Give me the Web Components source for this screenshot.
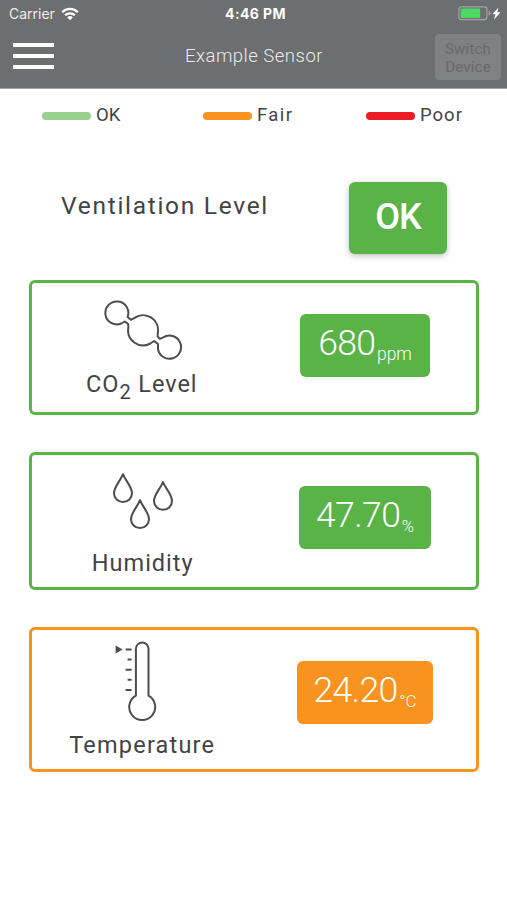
<!DOCTYPE html>
<html lang="en">
<head>
<meta charset="utf-8">
<title>Example Sensor</title>
<style>
  html, body { margin: 0; height: 100%; background: #fff; }
  body { font-family: Roboto, "Liberation Sans", sans-serif; color: #434345; }
</style>
</head>
<body>
<sensor-app></sensor-app>

<script>
class StatusBar extends HTMLElement {
  constructor() {
    super();
    this.attachShadow({ mode: 'open' });
    this.shadowRoot.innerHTML = `
<style>
  :host { display: grid; grid-template-columns: 1fr auto 1fr; align-items: center; height: 27px; padding: 0 5px 0 9px; color: #fff; font: 400 14px/27px Inter, sans-serif; }
  .left { display: flex; align-items: center; gap: 6px; color: #ececec; }
  .time { font-weight: 700; font-size: 14px; letter-spacing: .4px; }
  .right { display: flex; justify-content: flex-end; }
  svg { display: block; }
</style>
<div class="left"><span>Carrier</span>
  <svg width="18" height="14" viewBox="0 0 18 14" fill="none" stroke="#fff" stroke-width="2.3">
    <path d="M1.2 5.2a11 11 0 0 1 15.6 0"/>
    <path d="M4.1 8.3a7 7 0 0 1 9.8 0"/>
    <path d="M9 13.2L6.2 10.4a4 4 0 0 1 5.600 0z" fill="#fff" stroke="none"/>
  </svg>
</div>
<div class="time">4:46 PM</div>
<div class="right">
  <svg width="44" height="15" viewBox="0 0 44 15">
    <rect x=".9" y=".9" width="28" height="12.8" rx="2.6" fill="none" stroke="#a2a3a5" stroke-width="1.2"/>
    <rect x="2.6" y="2.6" width="19.6" height="9.4" rx="1" fill="#4cd964"/>
    <path d="M30.600 5q2 .6 2 2.300t-2 2.300z" fill="#a2a3a5"/>
    <path d="M40.500 1.500l-6.200 6.800h3.200l-1.600 5.400 6.600-7.400h-3.300z" fill="#fff"/>
  </svg>
</div>`;
  }
}
customElements.define('status-bar', StatusBar);

class NavBar extends HTMLElement {
  constructor() {
    super();
    this.attachShadow({ mode: 'open' });
    this.shadowRoot.innerHTML = `
<style>
  :host { display: grid; grid-template-columns: 1fr auto 1fr; align-items: center; height: 61px; padding: 0 6px 0 13px; box-sizing: border-box; }
  .menu { display: grid; gap: 6.7px; width: 41px; padding-bottom: 3px; }
  .menu i { height: 4.3px; background: #fff; }
  .title { color: #ebebec; font-weight: 300; font-size: 18.5px; line-height: 24px; letter-spacing: .5px; padding-bottom: 4px; margin: 0 -.5px 0 -6.5px; }
  button { justify-self: end; width: 66px; height: 46px; margin: 0 0 1px; padding: 2px 0 0; border: 0; border-radius: 4px; background: #808183; color: #69696b; font: 400 15px/18px Roboto, sans-serif; letter-spacing: .2px; }
</style>
<div class="menu"><i></i><i></i><i></i></div>
<div class="title"><slot></slot></div>
<button>Switch<br>Device</button>`;
  }
}
customElements.define('nav-bar', NavBar);

class LegendItem extends HTMLElement {
  constructor() {
    super();
    this.attachShadow({ mode: 'open' });
    this.shadowRoot.innerHTML = `
<style>
  :host { display: flex; align-items: center; gap: 5.5px; font-size: 18.5px; line-height: 24px; letter-spacing: var(--ls, 1px); }
  i { width: 48.5px; height: 8px; border-radius: 4px; background: var(--c); margin-top: 2px; }
</style>
<i></i><span><slot></slot></span>`;
  }
}
customElements.define('legend-item', LegendItem);

class ValueBadge extends HTMLElement {
  constructor() {
    super();
    this.attachShadow({ mode: 'open' });
    this.shadowRoot.innerHTML = `
<style>
  :host { display: flex; justify-content: center; gap: 1.5px; box-sizing: border-box; width: var(--w); height: 62.5px; border-radius: 6px; background: var(--c); color: #fff; white-space: nowrap; }
  .num { font-weight: 300; font-size: 35.5px; line-height: 58px; letter-spacing: -.6px; }
  .unit { font-weight: 300; font-size: var(--us, 17.5px); line-height: 58px; padding-top: var(--up, 11px); }
</style>
<span class="num"><slot></slot></span><span class="unit"><slot name="unit"></slot></span>`;
  }
}
customElements.define('value-badge', ValueBadge);

class SensorCard extends HTMLElement {
  constructor() {
    super();
    this.attachShadow({ mode: 'open' });
    this.shadowRoot.innerHTML = `
<style>
  :host { display: grid; grid-template-columns: 223.5px 219px; box-sizing: border-box; width: 450px; border: 3.5px solid var(--c); border-radius: 6px; margin-left: 29px; }
  .what { display: flex; flex-direction: column; align-items: center; justify-content: space-between; }
  .label { font-size: 23.5px; line-height: 28px; white-space: nowrap; letter-spacing: var(--ll, 1px); margin-right: 2px; }
  .value { display: flex; justify-content: center; align-items: flex-start; padding-top: 31px; }
</style>
<div class="what"><slot name="icon"></slot><div class="label"><slot name="label"></slot></div></div>
<div class="value"><slot></slot></div>`;
  }
}
customElements.define('sensor-card', SensorCard);

const ICONS = {
  co2: `<svg width="80" height="62" viewBox="104.2 299 80 62">
    <path d="M127.800 317A11.500 11.500 0 1 0 121.500 323.500L125 321.500L128.300 324L128.600 327.500A15 15 0 0 0 150.500 343.500L154.300 341L158.200 344L158.200 349A11.600 11.600 0 1 0 163.500 337.300L160 338.800L157.800 336.300L158 333A15 15 0 0 0 134.800 317.800L131 319.800z"/>
  </svg>`,
  drops: `<svg width="62" height="58" viewBox="0 0 62 58">
    <path d="M11 2.200C8.500 9 2 14.500 2 21.300a9 8.700 0 0 0 18 0C20 14.500 13.500 9 11 2.200z"/>
    <path d="M51 10C48.500 16.800 42 22.300 42 29.100a9 8.700 0 0 0 18 0C60 22.300 53.500 16.800 51 10z"/>
    <path d="M28 28.200C25.500 35 19 40.500 19 47.300a9 8.700 0 0 0 18 0C37 40.500 30.500 35 28 28.200z"/>
  </svg>`,
  thermometer: `<svg width="42" height="80" viewBox="0 0 42 80">
    <path d="M20.900 54.600V7.800a6.300 6.300 0 0 1 12.600 0V54.600A13 13 0 1 1 20.900 54.600z"/>
    <path d="M10.600 8.500h6M12.600 18.600h4M10.600 28.700h6M12.600 38.800h4M10.600 49h6"/>
    <path d="M.6 4.500l7 4-7 4z" fill="#4d4d4f" stroke="none"/>
  </svg>`
};

class SensorIcon extends HTMLElement {
  constructor() {
    super();
    this.attachShadow({ mode: 'open' });
  }
  connectedCallback() {
    this.shadowRoot.innerHTML = `
<style>
  :host { display: block; }
  svg { display: block; fill: none; stroke: #4d4d4f; stroke-width: 2; stroke-linejoin: round; }
</style>${ICONS[this.getAttribute('name')]}`;
  }
}
customElements.define('sensor-icon', SensorIcon);

class SensorApp extends HTMLElement {
  constructor() {
    super();
    this.attachShadow({ mode: 'open' });
    this.shadowRoot.innerHTML = `
<style>
  :host { display: block; width: 507px; height: 900px; overflow: hidden; --ok: #5ab347; --fair: #f7931e; --poor: #ed1c24; }
  header { background: #6d6e70; height: 88px; border-bottom: 1px solid #a5a5a6; }
  .legend { display: grid; grid-template-columns: 161px 163px 1fr; padding: 14px 0 0 42px; height: 24px; }
  .level { display: flex; height: 72px; margin-top: 55px; padding: 0 60px 0 61px; justify-content: space-between; font-size: 24.5px; }
  .level span { line-height: 28px; padding-top: 10px; letter-spacing: 1.7px; }
  .ok { width: 98px; box-sizing: border-box; border-radius: 6px; background: var(--ok); color: #fff; font-weight: 500; font-size: 36px; line-height: 71px; letter-spacing: -1px; text-align: center; box-shadow: 0 2px 6px rgba(0,0,0,.25); }
  .co2 { --c: var(--ok); height: 135px; margin-top: 26px; --ll: .95px; }
  .hum { --c: var(--ok); height: 138px; margin-top: 37px; }
  .temp { --c: var(--fair); height: 145px; margin-top: 37px; --ll: 1.2px; }
  sub { font-size: 20px; line-height: 0; vertical-align: -6.5px; }
  .co2 sensor-icon { padding-top: 16px; }
  .co2 [slot=label] { display: block; padding-bottom: 14px; margin-right: 2px; }
  .hum sensor-icon { padding-top: 17px; margin-right: 2px; }
  .hum [slot=label] { display: block; padding-bottom: 10px; }
  .temp sensor-icon { padding-top: 11px; margin-right: 16px; }
  .temp [slot=label] { display: block; padding-bottom: 10px; margin-right: 1px; }
</style>
<header>
  <status-bar></status-bar>
  <nav-bar>Example Sensor</nav-bar>
</header>
<div class="legend">
  <legend-item style="--c: #9ad08e; --ls: 0">OK</legend-item>
  <legend-item style="--c: var(--fair); --ls: 1.4px">Fair</legend-item>
  <legend-item style="--c: var(--poor)">Poor</legend-item>
</div>
<div class="level"><span>Ventilation Level</span><div class="ok">OK</div></div>
<sensor-card class="co2">
  <sensor-icon slot="icon" name="co2"></sensor-icon>
  <span slot="label">CO<sub>2</sub> Level</span>
  <value-badge style="--w: 130px">680<span slot="unit">ppm</span></value-badge>
</sensor-card>
<sensor-card class="hum">
  <sensor-icon slot="icon" name="drops"></sensor-icon>
  <span slot="label">Humidity</span>
  <value-badge style="--w: 132px; --us: 16.5px; --up: 12px">47.70<span slot="unit">%</span></value-badge>
</sensor-card>
<sensor-card class="temp">
  <sensor-icon slot="icon" name="thermometer"></sensor-icon>
  <span slot="label">Temperature</span>
  <value-badge style="--w: 136px; --us: 17px">24.20<span slot="unit">°C</span></value-badge>
</sensor-card>`;
  }
}
customElements.define('sensor-app', SensorApp);
</script>
</body>
</html>
